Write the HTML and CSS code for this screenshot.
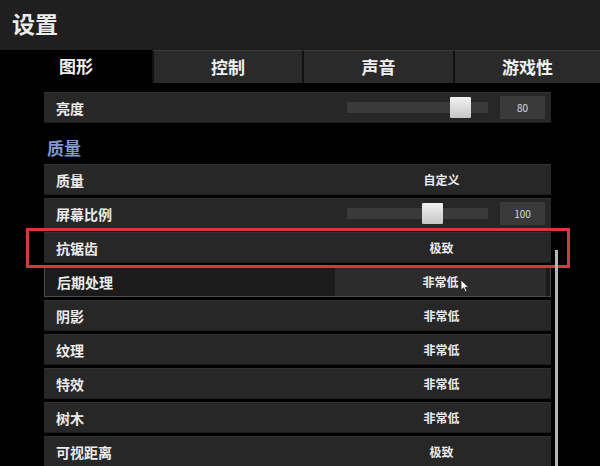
FILE: index.html
```html
<!DOCTYPE html>
<html lang="zh-CN">
<head>
  <meta charset="UTF-8" />
  <title>设置</title>
  <link rel="stylesheet" href="styles.css">
</head>
<body>
  <div class="titlebar">设置</div>

  <div class="tabs">
    <div class="tab active">图形</div>
    <div class="tab">控制</div>
    <div class="tab">声音</div>
    <div class="tab">游戏性</div>
  </div>

  <div class="content">
    <!-- Brightness -->
    <div class="row">
      <div class="label">亮度</div>
      <div class="slider">
        <div class="track"><span class="thumb thumb-80"></span></div>
        <div class="num">80</div>
      </div>
    </div>

    <div class="section">质量</div>

    <div class="row">
      <div class="label">质量</div>
      <div class="value">自定义</div>
    </div>
    <div class="row">
      <div class="label">屏幕比例</div>
      <div class="slider">
        <div class="track"><span class="thumb thumb-100"></span></div>
        <div class="num">100</div>
      </div>
    </div>
    <div class="row">
      <div class="label">抗锯齿</div>
      <div class="value">极致</div>
    </div>
    <div class="row hover">
      <div class="label">后期处理</div>
      <div class="value">非常低</div>
    </div>
    <div class="row">
      <div class="label">阴影</div>
      <div class="value">非常低</div>
    </div>
    <div class="row">
      <div class="label">纹理</div>
      <div class="value">非常低</div>
    </div>
    <div class="row">
      <div class="label">特效</div>
      <div class="value">非常低</div>
    </div>
    <div class="row">
      <div class="label">树木</div>
      <div class="value">非常低</div>
    </div>
    <div class="row">
      <div class="label">可视距离</div>
      <div class="value">极致</div>
    </div>

    <!-- overlays -->
    <div class="highlight"></div>
    <div class="scrollbar"></div>
    <svg class="cursor" width="10" height="14" viewBox="0 0 10 14">
      <path d="M1 1 L1 11 L3.5 8.8 L5.5 13 L7 12.3 L5.1 8.2 L8.5 8.2 Z" fill="#fff" stroke="#222" stroke-width="0.8"/>
    </svg>
  </div>
</body>
</html>
```

FILE: styles.css
```css
html {
  overflow: hidden;
}

body {
  margin: 0;
  background: #000;
  color: #ececec;
  font-family: "Noto Sans CJK SC", "Noto Sans", sans-serif;
  width: 600px;
  height: 466px;
  overflow: hidden;
}

.titlebar {
  height: 50px;
  background: #1f1f1f;
  padding-left: 12px;
  font-size: 23px;
  font-weight: 700;
  line-height: 46px;
  box-sizing: border-box;
}

.tabs {
  display: grid;
  grid-template-columns: 152px 150px 151px 147px;
  height: 33px;
  background: #000;
}

.tab {
  background: #2a2a2a;
  border-left: 2px solid #111;
  border-top: 1px solid #3a3a3a;
  text-align: center;
  font-size: 17px;
  font-weight: 700;
  line-height: 32px;
  color: #f0f0f0;
}

.tab.active {
  background: #000;
  border: none;
}

.content {
  position: relative;
  height: 383px;
  overflow: hidden;
  padding: 9px 49px 0 44px;
  box-sizing: border-box;
}

.row {
  display: flex;
  align-items: center;
  height: 31px;
  margin-bottom: 3px;
  background: #272727;
  border-top: 1px solid #313131;
  border-bottom: 1px solid #1c1c1c;
  box-sizing: border-box;
}

.label {
  flex: 1;
  padding-left: 12px;
  font-size: 14px;
  font-weight: 700;
}

.value {
  width: 211px;
  margin-right: 4px;
  align-self: stretch;
  display: flex;
  align-items: center;
  justify-content: center;
  font-size: 12px;
  font-weight: 700;
}

.row.hover {
  background: #1b1b1b;
  border: 1px solid #4a4a4a;
}

.row.hover .value {
  background: #2c2c2c;
}

.slider {
  display: flex;
  align-items: center;
  gap: 12px;
  margin-right: 6px;
}

.track {
  position: relative;
  width: 141px;
  height: 11px;
  background: #3a3a3a;
}

.thumb {
  position: absolute;
  top: -5px;
  width: 21px;
  height: 21px;
  background: linear-gradient(#f2f2f2, #c6c6c6);
  border-radius: 1px;
}

.thumb-80 { left: 103px; }
.thumb-100 { left: 75px; }

.num {
  width: 45px;
  height: 23px;
  background: #3a3a3a;
  font-size: 10px;
  line-height: 23px;
  text-align: center;
  color: #ddd;
}

.section {
  height: 38px;
  padding-left: 3px;
  padding-top: 4px;
  box-sizing: border-box;
  display: flex;
  align-items: center;
  font-size: 17px;
  font-weight: 700;
  color: #7f98cf;
}

.highlight {
  position: absolute;
  left: 26px;
  top: 145px;
  width: 544px;
  height: 40px;
  border: 3px solid #d9363e;
  box-sizing: border-box;
}

.scrollbar {
  position: absolute;
  left: 555px;
  top: 167px;
  width: 3px;
  height: 240px;
  background: #b5b5b5;
}

.cursor {
  position: absolute;
  left: 460px;
  top: 196px;
}
```
